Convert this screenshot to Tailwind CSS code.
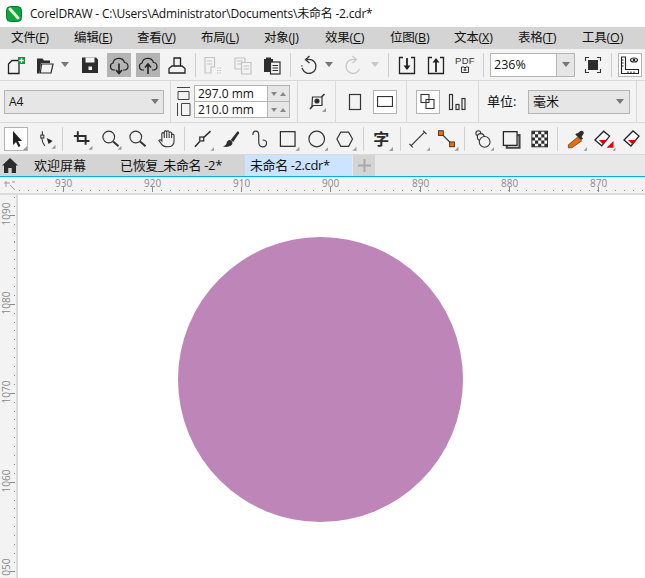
<!DOCTYPE html>
<html lang="en">
  <head>
    <meta charset="UTF-8" />
    <title>CorelDRAW</title>
    <script src="https://cdn.jsdelivr.net/npm/@tailwindcss/browser@4"></script>
  </head>
  <body class="overflow-hidden bg-white">
    <div class="flex flex-col w-[645px] h-[578px] overflow-hidden text-[#111] font-['Open_Sans','Noto_Sans_CJK_SC',sans-serif]">
      <!-- title bar -->
      <div class="flex items-center h-[27px] shrink-0 bg-white text-[12px] tracking-[-0.2px]">
        <svg width="16" height="16" viewBox="0 0 16 16" class="ml-[6px] mr-[8px]">
          <rect x="0.5" y="0.5" width="15" height="15" rx="4" fill="#0aa83f" stroke="#067a2c" />
          <path d="M4 3 L12 12" stroke="#e8f5e0" stroke-width="3" stroke-linecap="round" />
        </svg>
        <span>CorelDRAW - C:\Users\Administrator\Documents\未命名 -2.cdr*</span>
      </div>

      <!-- menu bar -->
      <div class="flex items-center h-[22px] shrink-0 bg-[#d4d4d4] text-[12.5px] tracking-[-0.2px]">
        <span class="ml-[11px] w-[63px]">文件(<u>F</u>)</span>
        <span class="w-[63px]">编辑(<u>E</u>)</span>
        <span class="w-[64px]">查看(<u>V</u>)</span>
        <span class="w-[63px]">布局(<u>L</u>)</span>
        <span class="w-[61px]">对象(<u>J</u>)</span>
        <span class="w-[65px]">效果(<u>C</u>)</span>
        <span class="w-[64px]">位图(<u>B</u>)</span>
        <span class="w-[64px]">文本(<u>X</u>)</span>
        <span class="w-[64px]">表格(<u>T</u>)</span>
        <span>工具(<u>O</u>)</span>
      </div>

      <!-- standard toolbar -->
      <div class="flex items-center h-[31px] shrink-0 bg-[#f3f3f3]">
        <svg width="24" height="24" viewBox="0 0 24 24" class="ml-[4px]" fill="none" stroke="#222" stroke-width="1.3">
          <path d="M4.5 11 L8 7.5 H15 V20.5 H4.5 Z" />
          <rect x="14" y="4" width="7" height="7" fill="#0a9a3c" stroke="none" />
          <path d="M17.5 5.3 V9.7 M15.3 7.5 H19.7" stroke="#fff" />
        </svg>
        <svg width="24" height="24" viewBox="0 0 24 24" class="ml-[5px]">
          <path d="M4 20.5 V5.5 H9.5 L11 7.5 H17 V10 H8 L6.5 20.5 Z" fill="#2d2d2d" />
          <path d="M7.3 20 L8.6 11 H20 L18 20 Z" fill="none" stroke="#2d2d2d" stroke-width="1.2" />
        </svg>
        <svg width="8" height="5" viewBox="0 0 8 5" class="ml-[4px]"><path d="M0 0 H8 L4 5 Z" fill="#777" /></svg>
        <svg width="24" height="24" viewBox="0 0 24 24" class="ml-[9px]">
          <path d="M4 4.5 H18 L20 6.5 V20 H4 Z" fill="#2d2d2d" />
          <rect x="7.5" y="4.5" width="9" height="5" fill="#f3f3f3" />
          <rect x="10.5" y="13.5" width="3.5" height="3.5" fill="#f3f3f3" />
        </svg>
        <div class="ml-[5px] w-[24px] h-[24px] bg-[#b4b4b4]">
          <svg width="24" height="24" viewBox="0 0 24 24" fill="none" stroke="#222" stroke-width="1.2">
            <path d="M8 17 H6.5 A3.6 3.6 0 0 1 6 10 A6 6 0 0 1 17.5 9.5 A3.8 3.8 0 0 1 18 17 H16" />
            <path d="M12 10.5 V20 M9 17 L12 20.5 L15 17" stroke-width="1.6" />
          </svg>
        </div>
        <div class="ml-[5px] w-[24px] h-[24px] bg-[#b4b4b4]">
          <svg width="24" height="24" viewBox="0 0 24 24" fill="none" stroke="#222" stroke-width="1.2">
            <path d="M8 17 H6.5 A3.6 3.6 0 0 1 6 10 A6 6 0 0 1 17.5 9.5 A3.8 3.8 0 0 1 18 17 H16" />
            <path d="M12 21 V11.5 M9 14.5 L12 11 L15 14.5" stroke-width="1.6" />
          </svg>
        </div>
        <svg width="24" height="24" viewBox="0 0 24 24" class="ml-[5px]" fill="none" stroke="#222" stroke-width="1.3">
          <path d="M9 13 V5 H15.5 V13" />
          <path d="M7 13 H17 L20 15.5 V20 H4 V15.5 Z" />
        </svg>
        <div class="ml-[6px] w-px h-[24px] bg-[#cfcfcf]"></div>
        <svg width="24" height="24" viewBox="0 0 24 24" class="ml-[5px]" fill="none" stroke="#c4c4c4" stroke-width="1.2">
          <path d="M4 4.5 H13.5 V14 H10 V20 H4 Z M6 8 H11 M6 11 H11" />
          <path d="M16 15 H20 M16 17.5 H20 M16 20 H20" stroke-dasharray="1.5 1" />
        </svg>
        <svg width="24" height="24" viewBox="0 0 24 24" class="ml-[6px]" fill="none" stroke="#c4c4c4" stroke-width="1.2">
          <path d="M4 5 H14 V16 H4 Z M6 8 H12 M6 11 H12" />
          <path d="M10.5 9.5 H20 V21 H10.5 Z M12.5 13 H18 M12.5 16 H18" fill="#f3f3f3" />
        </svg>
        <svg width="24" height="24" viewBox="0 0 24 24" class="ml-[5px]">
          <path d="M4 6 H6 V4.5 H11 V6 H13 V19 H4 Z" fill="#2d2d2d" />
          <rect x="10.5" y="9" width="9.5" height="12" fill="#f3f3f3" stroke="#2d2d2d" stroke-width="1.2" />
          <path d="M12.5 12.5 H18 M12.5 15 H18 M12.5 17.5 H18" stroke="#2d2d2d" />
        </svg>
        <div class="ml-[6px] w-px h-[24px] bg-[#cfcfcf]"></div>
        <svg width="24" height="24" viewBox="0 0 24 24" class="ml-[6px]" fill="none" stroke="#333" stroke-width="1.3">
          <path d="M9.5 6.8 A7 7 0 1 1 5.5 16" stroke-dasharray="none" />
          <path d="M5.5 16 A7 7 0 0 1 5 12" stroke-dasharray="1.2 1.4" />
          <path d="M12.5 3 L8.5 6.8 L12.5 10" />
        </svg>
        <svg width="8" height="5" viewBox="0 0 8 5" class="ml-[4px]"><path d="M0 0 H8 L4 5 Z" fill="#777" /></svg>
        <svg width="24" height="24" viewBox="0 0 24 24" class="ml-[8px]" fill="none" stroke="#c8c8c8" stroke-width="1.3">
          <path d="M14.5 6.8 A7 7 0 1 0 18.5 16" />
          <path d="M11.5 3 L15.5 6.8 L11.5 10" />
        </svg>
        <svg width="8" height="5" viewBox="0 0 8 5" class="ml-[6px]"><path d="M0 0 H8 L4 5 Z" fill="#c8c8c8" /></svg>
        <div class="ml-[9px] w-px h-[24px] bg-[#cfcfcf]"></div>
        <svg width="24" height="24" viewBox="0 0 24 24" class="ml-[6px]" fill="none" stroke="#222" stroke-width="1.3">
          <path d="M8 4.5 H4.5 V20.5 H19.5 V4.5 H16" />
          <path d="M12 5 V16" stroke-width="1.8" />
          <path d="M8.5 12.5 H15.5 L12 17 Z" fill="#222" stroke="none" />
        </svg>
        <svg width="24" height="24" viewBox="0 0 24 24" class="ml-[5px]" fill="none" stroke="#222" stroke-width="1.3">
          <path d="M8 4.5 H4.5 V20.5 H19.5 V4.5 H16" />
          <path d="M12 8 V19" stroke-width="1.8" />
          <path d="M8.5 9.5 H15.5 L12 5 Z" fill="#222" stroke="none" />
        </svg>
        <div class="ml-[5px] w-[24px] h-[24px] flex flex-col items-center justify-center leading-none text-[9.5px] tracking-[0.3px] text-[#333] font-['Liberation_Sans',sans-serif]">
          <span>PDF</span>
          <svg width="8" height="7" viewBox="0 0 8 7" fill="none" stroke="#333" class="mt-[1px]"><path d="M0.5 1 H3 L4 2 L5 1 H7.5 V6.5 H0.5 Z M4 2 V5 M2.5 4 H5.5" /></svg>
        </div>
        <div class="ml-[6px] w-px h-[24px] bg-[#cfcfcf]"></div>
        <div class="ml-[6px] flex w-[85px] h-[24px] bg-white border border-[#b4b4b4]">
          <span class="flex-1 pl-[3px] text-[12.5px] leading-[22px]">236%</span>
          <div class="flex items-center justify-center w-[18px] bg-[#e6e6e6] border-l border-[#b4b4b4]">
            <svg width="8" height="5" viewBox="0 0 8 5"><path d="M0 0 H8 L4 5 Z" fill="#777" /></svg>
          </div>
        </div>
        <svg width="24" height="24" viewBox="0 0 24 24" class="ml-[6px]" fill="none" stroke="#333" stroke-width="1.1">
          <rect x="7" y="7" width="10" height="10" fill="#2d2d2d" stroke="none" />
          <path d="M8 4.5 H4.5 V8 M16 4.5 H19.5 V8 M8 19.5 H4.5 V16 M16 19.5 H19.5 V16" />
        </svg>
        <div class="ml-[6px] w-px h-[24px] bg-[#cfcfcf]"></div>
        <div class="ml-[6px] w-[24px] h-[24px] bg-white border border-[#b4b4b4]">
          <svg width="22" height="22" viewBox="0 0 22 22" fill="none" stroke="#222" stroke-width="1.1">
            <path d="M2.5 3 H6.5 V15.5 H19.5 V19.5 H2.5 Z M2.5 6 H4.5 M2.5 9 H4.5 M2.5 12 H4.5 M9 17.5 V19.5 M12 17.5 V19.5 M15 17.5 V19.5" />
            <ellipse cx="15" cy="6" rx="3.5" ry="2" />
            <circle cx="15" cy="6" r="0.8" fill="#222" />
          </svg>
        </div>
      </div>

      <!-- property bar -->
      <div class="flex items-center h-[43px] shrink-0 bg-[#f3f3f3] border-t border-b border-[#d9d9d9]">
        <div class="ml-[4px] flex items-center justify-between w-[160px] h-[24px] px-[4px] bg-[#e6e6e6] border border-[#b4b4b4] text-[12px]">
          <span>A4</span>
          <svg width="8" height="5" viewBox="0 0 8 5"><path d="M0 0 H8 L4 5 Z" fill="#777" /></svg>
        </div>
        <div class="ml-[6px] w-px h-[41px] bg-[#d9d9d9]"></div>
        <div class="ml-[5px] flex flex-col gap-[1px] w-[17px]">
          <svg width="17" height="15" viewBox="0 0 17 15" fill="none" stroke="#444"><path d="M1 1.5 H14 M2 5.5 H13 V13.5 H2 Z" /></svg>
          <svg width="17" height="15" viewBox="0 0 17 15" fill="none" stroke="#444"><path d="M1.5 1 V14 M5.5 1.5 H14 V13.5 H5.5 Z" /></svg>
        </div>
        <div class="ml-[1px] flex w-[96px] flex-col border border-[#b4b4b4] text-[12px] leading-[15px]">
          <div class="flex h-[16px] border-b border-[#b4b4b4]">
            <span class="w-[72px] bg-white pl-[3px]">297.0 mm</span>
            <div class="flex flex-1 items-center justify-evenly bg-[#e6e6e6] border-l border-[#b4b4b4]">
              <svg width="6" height="4" viewBox="0 0 6 4"><path d="M0 0 H6 L3 4 Z" fill="#888" /></svg>
              <svg width="6" height="4" viewBox="0 0 6 4"><path d="M0 4 H6 L3 0 Z" fill="#888" /></svg>
            </div>
          </div>
          <div class="flex h-[15px]">
            <span class="w-[72px] bg-white pl-[3px]">210.0 mm</span>
            <div class="flex flex-1 items-center justify-evenly bg-[#e6e6e6] border-l border-[#b4b4b4]">
              <svg width="6" height="4" viewBox="0 0 6 4"><path d="M0 0 H6 L3 4 Z" fill="#888" /></svg>
              <svg width="6" height="4" viewBox="0 0 6 4"><path d="M0 4 H6 L3 0 Z" fill="#888" /></svg>
            </div>
          </div>
        </div>
        <div class="ml-[7px] w-px h-[41px] bg-[#d9d9d9]"></div>
        <svg width="24" height="24" viewBox="0 0 24 24" class="ml-[7px]" fill="none" stroke="#333" stroke-width="1.2">
          <path d="M7.5 7 H17 V15.5 H7 Z" />
          <circle cx="12" cy="11" r="2" fill="#222" />
          <path d="M5 19 L8 15.5 M16.5 7 L19.5 4" stroke-width="1.6" />
          <path d="M21 22 H17 L21 18 Z" fill="#999" stroke="none" />
        </svg>
        <div class="ml-[6px] w-px h-[41px] bg-[#d9d9d9]"></div>
        <svg width="24" height="24" viewBox="0 0 24 24" class="ml-[7px]" fill="none" stroke="#333" stroke-width="1.2"><rect x="6.5" y="4.5" width="11" height="15" /></svg>
        <div class="ml-[6px] flex items-center justify-center w-[24px] h-[24px] bg-white border border-[#b4b4b4]">
          <svg width="16" height="11" viewBox="0 0 16 11" fill="none" stroke="#333" stroke-width="1.2"><rect x="0.5" y="0.5" width="15" height="10" /></svg>
        </div>
        <div class="ml-[9px] w-px h-[41px] bg-[#d9d9d9]"></div>
        <div class="ml-[9px] w-[24px] h-[24px] bg-white border border-[#b4b4b4]">
          <svg width="22" height="22" viewBox="0 0 22 22" fill="none" stroke="#333" stroke-width="1.1">
            <rect x="4" y="3.5" width="8" height="8" />
            <rect x="9" y="8.5" width="8" height="9" />
          </svg>
        </div>
        <svg width="24" height="24" viewBox="0 0 24 24" class="ml-[5px]" fill="none" stroke="#333" stroke-width="1.2">
          <rect x="4.5" y="4.5" width="3" height="15" />
          <rect x="11" y="14.5" width="3" height="5" />
          <rect x="17" y="8.5" width="3" height="11" />
        </svg>
        <div class="ml-[9px] w-px h-[41px] bg-[#d9d9d9]"></div>
        <span class="ml-[8px] w-[32px] text-[13px] whitespace-nowrap">单位:</span>
        <div class="ml-[9px] flex items-center justify-between w-[102px] h-[24px] pl-[4px] pr-[5px] bg-[#e6e6e6] border border-[#b4b4b4] text-[13px]">
          <span>毫米</span>
          <svg width="8" height="5" viewBox="0 0 8 5"><path d="M0 0 H8 L4 5 Z" fill="#777" /></svg>
        </div>
        <div class="ml-[6px] w-px h-[41px] bg-[#d9d9d9]"></div>
      </div>

      <!-- tool row -->
      <div class="flex items-center h-[32px] shrink-0 bg-[#f3f3f3] border-b border-[#d9d9d9]">
        <div class="ml-[4px] w-[24px] h-[24px] bg-white border border-[#b4b4b4]">
          <svg width="22" height="22" viewBox="0 0 22 22">
            <path d="M8 3 V17 L11 14 L13.5 19 L15.5 18 L13 13 H17 Z" fill="#222" />
            <path d="M22 22 H18 L22 18 Z" fill="#999" />
          </svg>
        </div>
        <svg width="24" height="24" viewBox="0 0 24 24" class="ml-[7px]" fill="none" stroke="#333" stroke-width="1.1">
          <rect x="6" y="8" width="3" height="3" />
          <path d="M7.5 4 V8 M7 11 Q7 15 10 19" />
          <path d="M12 11 L18 14 L14 17 Z" fill="#222" stroke="none" />
          <path d="M21 22 H17 L21 18 Z" fill="#999" stroke="none" />
        </svg>
        <div class="ml-[4px] w-px h-[24px] bg-[#cfcfcf]"></div>
        <svg width="24" height="24" viewBox="0 0 24 24" class="ml-[7px]" fill="none" stroke="#2d2d2d" stroke-width="2">
          <path d="M4 9 H16 V18 M8 4 V14 H20" />
          <path d="M23 23 H19 L23 19 Z" fill="#999" stroke="none" />
        </svg>
        <svg width="24" height="24" viewBox="0 0 24 24" class="ml-[5px]" fill="none" stroke="#333" stroke-width="1.2">
          <circle cx="10" cy="10" r="6" />
          <path d="M14.5 14.5 L20 19.5" stroke-width="2" />
          <path d="M23 23 H19 L23 19 Z" fill="#999" stroke="none" />
        </svg>
        <svg width="24" height="24" viewBox="0 0 24 24" class="ml-[4px]" fill="none" stroke="#333" stroke-width="1.2">
          <circle cx="10" cy="10" r="6" />
          <path d="M14.5 14.5 L20 19.5" stroke-width="2" />
        </svg>
        <svg width="24" height="24" viewBox="0 0 24 24" class="ml-[5px]" fill="none" stroke="#333" stroke-width="1.1">
          <path d="M7 14 V7 Q7 5.5 8.2 5.5 T9.5 7 V5 Q9.5 3.7 10.7 3.7 T12 5 V4.5 Q12 3.5 13.2 3.5 T14.5 5 V6 Q14.5 4.8 15.8 4.8 T17 6 V8 Q17 7 18.2 7 T19.5 8.5 V14 Q19.5 20 13 20 Q8.5 20 6.5 17 L4 13.5 Q5.5 12 7 14 Z" />
          <path d="M9.5 7 V11 M12 5 V11 M14.5 6 V11 M17 8 V11" />
        </svg>
        <div class="ml-[6px] w-px h-[24px] bg-[#cfcfcf]"></div>
        <svg width="24" height="24" viewBox="0 0 24 24" class="ml-[6px]" fill="none" stroke="#2d2d2d" stroke-width="1.3">
          <path d="M4 20 L9 14.5 M13 10.5 L20 4" stroke-width="1.6" />
          <rect x="9" y="10" width="4" height="4" />
          <path d="M24 24 H20 L24 20 Z" fill="#999" stroke="none" />
        </svg>
        <svg width="24" height="24" viewBox="0 0 24 24" class="ml-[5px]">
          <path d="M12 13 L19 4 Q21 4 20.5 6 L14.5 15 Z" fill="#2d2d2d" />
          <path d="M4 19.5 Q8 18.5 8 15 Q10 11.5 13 14 Q15 17 12 19 Q8 21 4 19.5 Z" fill="#2d2d2d" />
        </svg>
        <svg width="24" height="24" viewBox="0 0 24 24" class="ml-[5px]" fill="none" stroke="#333" stroke-width="1.2">
          <path d="M5 8 Q5 4 8 4 Q11 4 11 8 V15 Q11 20 15 20 Q19 20 19 16 Q19 13 15 13" />
        </svg>
        <svg width="24" height="24" viewBox="0 0 24 24" class="ml-[5px]" fill="none" stroke="#222" stroke-width="1.2">
          <rect x="4.5" y="4.5" width="15" height="15" />
          <path d="M24 24 H20 L24 20 Z" fill="#999" stroke="none" />
        </svg>
        <svg width="24" height="24" viewBox="0 0 24 24" class="ml-[5px]" fill="none" stroke="#333" stroke-width="1.2">
          <circle cx="12" cy="12" r="8" />
          <path d="M24 24 H20 L24 20 Z" fill="#999" stroke="none" />
        </svg>
        <svg width="24" height="24" viewBox="0 0 24 24" class="ml-[5px]" fill="none" stroke="#333" stroke-width="1.2">
          <path d="M8 5 H16 L20 12 L16 19.5 H8 L4 12 Z" />
          <path d="M24 24 H20 L24 20 Z" fill="#999" stroke="none" />
        </svg>
        <div class="ml-[6px] w-px h-[24px] bg-[#cfcfcf]"></div>
        <div class="relative ml-[6px] flex items-center justify-center w-[24px] h-[24px] text-[16px] font-bold leading-none text-[#2d2d2d]">
          字
          <svg width="4" height="4" viewBox="0 0 4 4" class="absolute right-0 bottom-0"><path d="M4 4 H0 L4 0 Z" fill="#999" /></svg>
        </div>
        <div class="ml-[7px] w-px h-[24px] bg-[#cfcfcf]"></div>
        <svg width="24" height="24" viewBox="0 0 24 24" class="ml-[6px]" fill="none" stroke="#333" stroke-width="1.2">
          <path d="M4 19 L18 5 M2.5 17 L6 20.5 M16.5 3.5 L20 7" />
          <path d="M24 24 H20 L24 20 Z" fill="#999" stroke="none" />
        </svg>
        <svg width="24" height="24" viewBox="0 0 24 24" class="ml-[5px]">
          <path d="M6.5 6.5 L17.5 17.5" stroke="#333" stroke-width="1.4" />
          <rect x="3.5" y="3.5" width="5" height="5" fill="#ef6c00" stroke="#222" stroke-width="0.8" />
          <rect x="15" y="15" width="5" height="5" fill="#ef6c00" stroke="#222" stroke-width="0.8" />
          <path d="M24 24 H20 L24 20 Z" fill="#999" />
        </svg>
        <div class="ml-[5px] w-px h-[24px] bg-[#cfcfcf]"></div>
        <svg width="24" height="24" viewBox="0 0 24 24" class="ml-[6px]" fill="none" stroke="#333" stroke-width="1.1">
          <circle cx="7.5" cy="6" r="2.5" />
          <circle cx="10" cy="10" r="3.5" fill="#f3f3f3" />
          <circle cx="14" cy="15" r="5.5" fill="#f3f3f3" />
          <path d="M24 24 H20 L24 20 Z" fill="#999" stroke="none" />
        </svg>
        <svg width="24" height="24" viewBox="0 0 24 24" class="ml-[5px]" fill="none" stroke="#222">
          <path d="M19 8 H21 V21 H8 V19" stroke-width="2.2" stroke="#444" />
          <rect x="4.5" y="4.5" width="14" height="14" stroke-width="1.3" />
        </svg>
        <svg width="24" height="24" viewBox="0 0 24 24" class="ml-[5px]">
          <rect x="4" y="4" width="16" height="16" fill="#fff" />
          <path d="M4 4 H7.2 V7.2 H4 Z M10.4 4 H13.6 V7.2 H10.4 Z M16.8 4 H20 V7.2 H16.8 Z M7.2 7.2 H10.4 V10.4 H7.2 Z M13.6 7.2 H16.8 V10.4 H13.6 Z M4 10.4 H7.2 V13.6 H4 Z M10.4 10.4 H13.6 V13.6 H10.4 Z M16.8 10.4 H20 V13.6 H16.8 Z M7.2 13.6 H10.4 V16.8 H7.2 Z M13.6 13.6 H16.8 V16.8 H13.6 Z M4 16.8 H7.2 V20 H4 Z M10.4 16.8 H13.6 V20 H10.4 Z M16.8 16.8 H20 V20 H16.8 Z" fill="#2d2d2d" />
          <rect x="4" y="4" width="16" height="16" fill="none" stroke="#2d2d2d" />
        </svg>
        <div class="ml-[6px] w-px h-[24px] bg-[#cfcfcf]"></div>
        <svg width="24" height="24" viewBox="0 0 24 24" class="ml-[6px]">
          <path d="M14 10 L18 14 L8 21 L4.5 21 L4.5 18 Z" fill="#ef6c00" stroke="#333" stroke-width="0.7" />
          <path d="M14 6 L16.5 4 Q18.5 3 20 4.5 Q21 6 19.5 7.5 L18 10 L19.5 11.5 L17.5 13 L11.5 7.5 L13 6 Z" fill="#2d2d2d" />
          <path d="M24 24 H20 L24 20 Z" fill="#999" />
        </svg>
        <svg width="24" height="24" viewBox="0 0 24 24" class="ml-[5px]">
          <path d="M3 13 L12 4 L18 9 L10 19 Z" fill="#fff" stroke="#222" stroke-width="1.3" />
          <path d="M7 13 H15 L11 17 Z" fill="#e00" />
          <path d="M15 21 H22 L22 14 Z" fill="#e00" />
          <path d="M24 24 H21 L24 21 Z" fill="#999" />
        </svg>
        <svg width="24" height="24" viewBox="0 0 24 24" class="ml-[5px] shrink-0">
          <path d="M3 13 L12 4 L18 9 L10 19 Z" fill="#fff" stroke="#222" stroke-width="1.3" />
          <path d="M7 13 H15 L11 17 Z" fill="#e00" />
        </svg>
      </div>

      <!-- document tabs -->
      <div class="flex h-[22px] shrink-0 bg-[#e8e8e8] border-b border-[#00aeef] text-[13px] leading-[21px]">
        <div class="flex items-center justify-center w-[20px] bg-[#d4d4d4]">
          <svg width="16" height="15" viewBox="0 0 16 15"><path d="M8 0 L16 7.5 H14 V15 H9.7 V10 H6.3 V15 H2 V7.5 H0 Z" fill="#2d2d2d" /></svg>
        </div>
        <span class="w-[94px] pl-[14px] bg-[#d4d4d4]">欢迎屏幕</span>
        <span class="w-[131px] pl-[6px] bg-[#d4d4d4] tracking-[-0.35px]">已恢复_未命名 -2*</span>
        <span class="w-[107px] pl-[5px] bg-[#cce4ff] tracking-[-0.4px]">未命名 -2.cdr*</span>
        <span class="flex items-center justify-center w-[22px] ml-px bg-[#d4d4d4]">
          <svg width="13" height="13" viewBox="0 0 13 13"><path d="M6.5 0 V13 M0 6.5 H13" stroke="#a8a8a8" stroke-width="2" /></svg>
        </span>
      </div>

      <!-- horizontal ruler -->
      <div class="relative h-[18px] shrink-0 bg-[#f3f3f3] border-b-2 border-[#dcdcdc] text-[10px] leading-none text-[#8a8a8a]">
        <svg width="12" height="12" viewBox="0 0 12 12" class="absolute left-[4px] top-[3px]" fill="none" stroke="#999">
          <path d="M2 1 V7 M0 3 H6 M6 5 L11 10 M8 2 L11 2" />
        </svg>
        <div class="absolute left-[19px] right-0 bottom-[2px] h-[1px] bg-[repeating-linear-gradient(90deg,#8a8a8a_0,#8a8a8a_1px,transparent_1px,transparent_8.9px)]"></div>
        <span class="absolute left-[55px] top-[1px]">930</span><i class="absolute left-[63px] top-[10px] w-px h-[5px] bg-[#8a8a8a]"></i>
        <span class="absolute left-[144px] top-[1px]">920</span><i class="absolute left-[152px] top-[10px] w-px h-[5px] bg-[#8a8a8a]"></i>
        <span class="absolute left-[233px] top-[1px]">910</span><i class="absolute left-[241px] top-[10px] w-px h-[5px] bg-[#8a8a8a]"></i>
        <span class="absolute left-[322px] top-[1px]">900</span><i class="absolute left-[330px] top-[10px] w-px h-[5px] bg-[#8a8a8a]"></i>
        <span class="absolute left-[412px] top-[1px]">890</span><i class="absolute left-[420px] top-[10px] w-px h-[5px] bg-[#8a8a8a]"></i>
        <span class="absolute left-[501px] top-[1px]">880</span><i class="absolute left-[509px] top-[10px] w-px h-[5px] bg-[#8a8a8a]"></i>
        <span class="absolute left-[590px] top-[1px]">870</span><i class="absolute left-[598px] top-[10px] w-px h-[5px] bg-[#8a8a8a]"></i>
      </div>

      <!-- workspace -->
      <div class="flex flex-1 min-h-0">
        <div class="relative w-[18px] shrink-0 bg-[#f3f3f3] border-r-2 border-[#dcdcdc] text-[10px] leading-none text-[#8a8a8a]">
          <div class="absolute left-[14px] top-[2px] bottom-0 w-px bg-[repeating-linear-gradient(180deg,#8a8a8a_0,#8a8a8a_1px,transparent_1px,transparent_8.9px)]"></div>
          <span class="absolute left-[-6px] top-[14px] -rotate-90 w-[24px] text-center">1090</span><i class="absolute left-[10px] top-[20px] w-[5px] h-px bg-[#8a8a8a]"></i>
          <span class="absolute left-[-6px] top-[103px] -rotate-90 w-[24px] text-center">1080</span><i class="absolute left-[10px] top-[109px] w-[5px] h-px bg-[#8a8a8a]"></i>
          <span class="absolute left-[-6px] top-[192px] -rotate-90 w-[24px] text-center">1070</span><i class="absolute left-[10px] top-[198px] w-[5px] h-px bg-[#8a8a8a]"></i>
          <span class="absolute left-[-6px] top-[281px] -rotate-90 w-[24px] text-center">1060</span><i class="absolute left-[10px] top-[287px] w-[5px] h-px bg-[#8a8a8a]"></i>
          <span class="absolute left-[-6px] top-[370px] -rotate-90 w-[24px] text-center">1050</span><i class="absolute left-[10px] top-[376px] w-[5px] h-px bg-[#8a8a8a]"></i>
        </div>
        <div class="relative flex-1 bg-white">
          <div class="absolute left-[160px] top-[42px] w-[285px] h-[285px] rounded-full bg-[#bd85b8]"></div>
        </div>
      </div>
    </div>
  </body>
</html>
